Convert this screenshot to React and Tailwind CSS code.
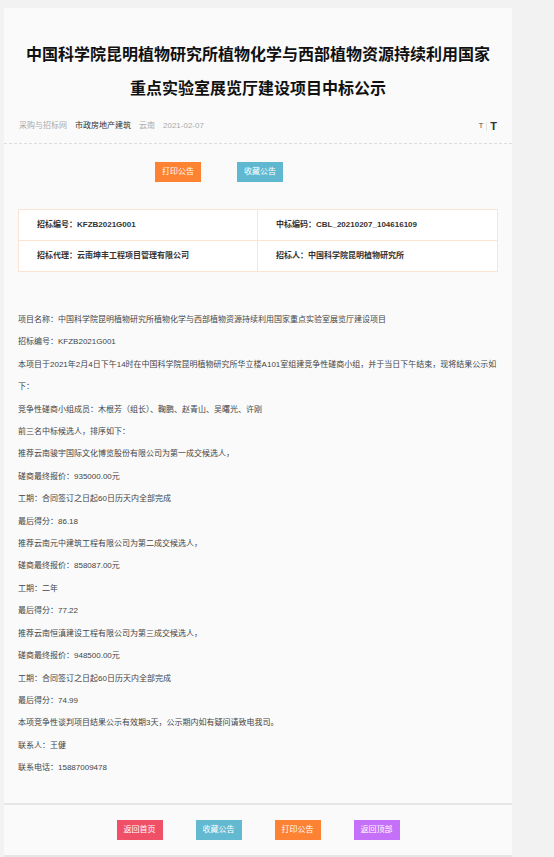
import React from "react";

const font = { fontFamily: '"Liberation Sans", "Noto Sans CJK SC", sans-serif' };

const lines = [
  "项目名称：中国科学院昆明植物研究所植物化学与西部植物资源持续利用国家重点实验室展览厅建设项目",
  "招标编号：KFZB2021G001",
  "本项目于2021年2月4日下午14时在中国科学院昆明植物研究所华立楼A101室组建竞争性磋商小组，并于当日下午结束，现将结果公示如下：",
  "竞争性磋商小组成员：木根芳（组长）、鞠鹏、赵青山、吴曙光、许刚",
  "前三名中标候选人，排序如下：",
  "推荐云南骏宇国际文化博览股份有限公司为第一成交候选人，",
  "磋商最终报价：935000.00元",
  "工期：合同签订之日起60日历天内全部完成",
  "最后得分：86.18",
  "推荐云南元中建筑工程有限公司为第二成交候选人，",
  "磋商最终报价：858087.00元",
  "工期：二年",
  "最后得分：77.22",
  "推荐云南恒滇建设工程有限公司为第三成交候选人，",
  "磋商最终报价：948500.00元",
  "工期：合同签订之日起60日历天内全部完成",
  "最后得分：74.99",
  "本项竞争性谈判项目结果公示有效期3天，公示期内如有疑问请致电我司。",
  "联系人：王健",
  "联系电话：15887009478",
];

const Btn = ({ color, children }) => (
  <button className={`w-[46px] h-[20px] flex items-center justify-center text-[8px] text-white ${color}`}>
    {children}
  </button>
);

export default function App() {
  return (
    <div className="min-h-[857px] bg-[#f2f2f2] pt-[8px] pl-[4px] pr-[42px]" style={font}>
      <div className="bg-[#fafafa] w-[508px]">
        {/* 标题 */}
        <div className="px-[14px] pt-[30px] pb-[10px] border-b border-dashed border-[#dddddd]">
          <h1 className="text-center text-[16px] font-bold leading-[34px] text-[#111]">
            中国科学院昆明植物研究所植物化学与西部植物资源持续利用国家
            <br />
            重点实验室展览厅建设项目中标公示
          </h1>
          <div className="mt-[13px] flex items-center text-[8px] leading-[14px] pl-[1px]">
            <span className="text-[#aaaaaa]">采购与招标网</span>
            <span className="ml-[8px] text-[#333]">市政房地产建筑</span>
            <span className="ml-[8px] text-[#aaaaaa]">云南</span>
            <span className="ml-[8px] text-[#aaaaaa]">2021-02-07</span>
            <span className="ml-auto mr-[1px] flex items-center">
              <span className="text-[8px] text-[#555]">T</span>
              <span className="mx-[3px] w-[1px] h-[9px] bg-[#e5e5e5]"></span>
              <span className="text-[11px] font-bold text-[#333]">T</span>
            </span>
          </div>
        </div>

        {/* 操作按钮 */}
        <div className="flex pl-[151px] gap-[36px] pt-[18px]">
          <Btn color="bg-[#fd8232]">打印公告</Btn>
          <Btn color="bg-[#5fb8cf]">收藏公告</Btn>
        </div>

        {/* 信息表 */}
        <div className="mx-[14px] mt-[27px] border border-[#fde3d2] bg-white grid grid-cols-2 text-[8px] font-bold text-[#333]">
          <div className="h-[31px] flex items-center pl-[18px] border-r border-b border-[#fde3d2]">招标编号：KFZB2021G001</div>
          <div className="h-[31px] flex items-center pl-[18px] border-b border-[#fde3d2]">中标编码：CBL_20210207_104616109</div>
          <div className="h-[30px] flex items-center pl-[18px] border-r border-[#fde3d2]">招标代理：云南坤丰工程项目管理有限公司</div>
          <div className="h-[30px] flex items-center pl-[18px]">招标人：中国科学院昆明植物研究所</div>
        </div>

        {/* 正文 */}
        <div className="pl-[14px] pr-[6px] pt-[37px] pb-[23px] text-[8px] leading-[22.4px] text-[#444]">
          {lines.map((t, i) => (
            <p key={i}>{t}</p>
          ))}
        </div>

        {/* 底部按钮 */}
        <div className="border-t-2 border-b-2 border-[#e6e6e6] h-[54px] flex items-center justify-center gap-[33px]">
          <Btn color="bg-[#f05067]">返回首页</Btn>
          <Btn color="bg-[#63b9cf]">收藏公告</Btn>
          <Btn color="bg-[#fe8233]">打印公告</Btn>
          <Btn color="bg-[#c470f8]">返回顶部</Btn>
        </div>
        <div className="h-[8px] bg-white"></div>
      </div>
    </div>
  );
}
